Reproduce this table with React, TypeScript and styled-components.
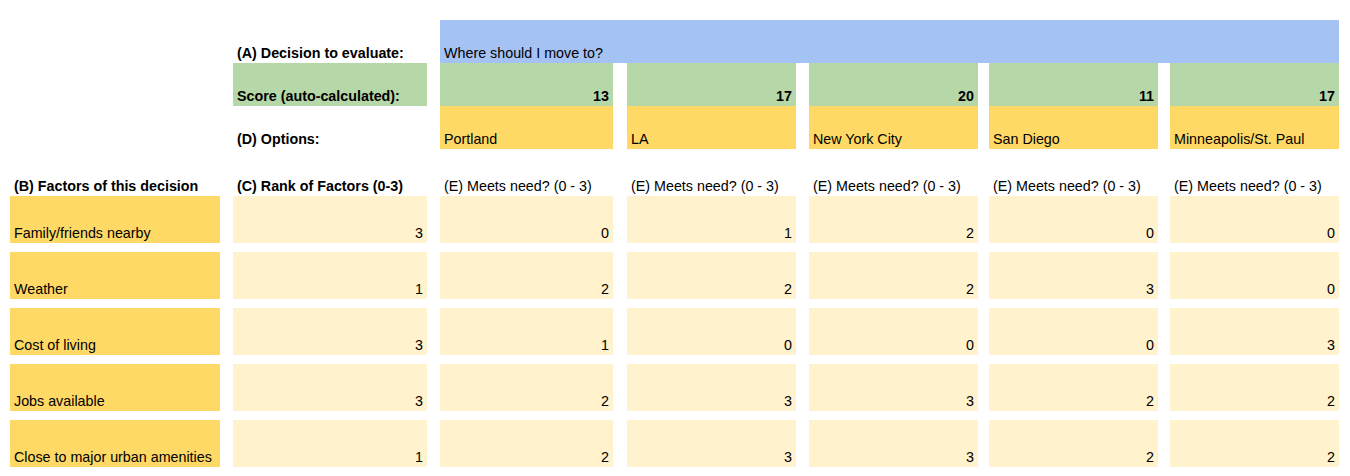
import { Fragment } from 'react';
import styled, { createGlobalStyle } from 'styled-components';

/* ---------- dados ---------- */
const options = ['Portland', 'LA', 'New York City', 'San Diego', 'Minneapolis/St. Paul'];

const factors = [
    { name: 'Family/friends nearby', rank: 3, needs: [0, 1, 2, 0, 0] },
    { name: 'Weather', rank: 1, needs: [2, 2, 2, 3, 0] },
    { name: 'Cost of living', rank: 3, needs: [1, 0, 0, 0, 3] },
    { name: 'Jobs available', rank: 3, needs: [2, 3, 3, 2, 2] },
    { name: 'Close to major urban amenities', rank: 1, needs: [2, 3, 3, 2, 2] },
];

// score = soma(rank * meets need)
const scores = options.map((_, i) => factors.reduce((acc, f) => acc + f.rank * f.needs[i], 0));

/* colunas da planilha (com colunas estreitas de espaçamento entre elas) */
const tracks = '210px 13px 194px 13px 173px 14px 169px 13px 169px 11px 169px 12px 169px';
const optCol = (i: number) => 5 + i * 2;

const colors = {
    blue: '#a4c2f4',
    green: '#b6d7a8',
    yellow: '#ffd966',
    paleYellow: '#fff2cc',
};

const GlobalStyle = createGlobalStyle`
    html, body { margin: 0; padding: 0; background: #fff; }
    body {
        font-family: "Liberation Sans", Arial, sans-serif;
        font-size: 14.3px;
        color: #000;
    }
`;

/* ---------- layout ---------- */
const Sheet = styled.div`
    padding: 20px 0 0 10px;
`;

const Grid = styled.div<{ $rows: string; $gap?: number }>`
    display: grid;
    grid-template-columns: ${tracks};
    grid-template-rows: ${p => p.$rows};
    row-gap: ${p => p.$gap ?? 0}px;
`;

const Cell = styled.div<{ $col: number; $span?: number; $bg?: string; $right?: boolean; $bold?: boolean }>`
    grid-column: ${p => p.$col} / span ${p => p.$span ?? 1};
    background: ${p => p.$bg ?? 'transparent'};
    display: flex;
    align-items: flex-end;
    justify-content: ${p => (p.$right ? 'flex-end' : 'flex-start')};
    padding: 0 4px 2px 4px;
    line-height: 16px;
    font-weight: ${p => (p.$bold ? 700 : 400)};
    white-space: nowrap;
    overflow: hidden;
`;

export default function App() {
    return (
        <>
            <GlobalStyle />
            <Sheet>
                {/* -------- decisão / score / opções -------- */}
                <Grid $rows="43px 43px 43px">
                    <Cell $col={3} $bold>(A) Decision to evaluate:</Cell>
                    <Cell $col={5} $span={9} $bg={colors.blue}>Where should I move to?</Cell>

                    <Cell $col={3} $bg={colors.green} $bold>Score (auto-calculated):</Cell>
                    {scores.map((s, i) => (
                        <Cell key={i} $col={optCol(i)} $bg={colors.green} $right $bold>{s}</Cell>
                    ))}

                    <Cell $col={3} $bold>(D) Options:</Cell>
                    {options.map((o, i) => (
                        <Cell key={o} $col={optCol(i)} $bg={colors.yellow}>{o}</Cell>
                    ))}
                </Grid>

                {/* -------- cabeçalhos -------- */}
                <Grid $rows="47px">
                    <Cell $col={1} $bold>(B) Factors of this decision</Cell>
                    <Cell $col={3} $bold>(C) Rank of Factors (0-3)</Cell>
                    {options.map((o, i) => (
                        <Cell key={o} $col={optCol(i)}>(E) Meets need? (0 - 3)</Cell>
                    ))}
                </Grid>

                {/* -------- fatores -------- */}
                <Grid $rows="repeat(5, 47px)" $gap={9}>
                    {factors.map(f => (
                        <Fragment key={f.name}>
                            <Cell $col={1} $bg={colors.yellow}>{f.name}</Cell>
                            <Cell $col={3} $bg={colors.paleYellow} $right>{f.rank}</Cell>
                            {f.needs.map((n, i) => (
                                <Cell key={i} $col={optCol(i)} $bg={colors.paleYellow} $right>{n}</Cell>
                            ))}
                        </Fragment>
                    ))}
                </Grid>
            </Sheet>
        </>
    );
}
